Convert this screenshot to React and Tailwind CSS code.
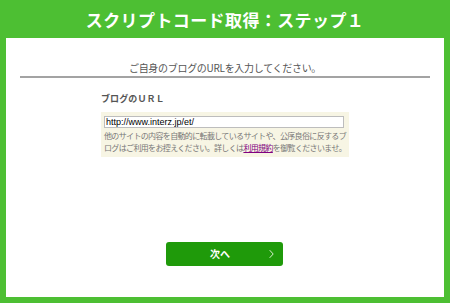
export default function App() {
  const jp = { fontFamily: '"Noto Sans CJK JP", "Liberation Sans", sans-serif' };
  return (
    <div
      className="w-[450px] h-[303px] bg-[#4dbf33] px-[6px] pb-[6px] flex flex-col"
      style={jp}
    >
      {/* Title bar */}
      <h1 className="h-[38px] flex items-center justify-center text-white font-bold text-[17px] leading-none tracking-[0.4px]">
        スクリプトコード取得：ステップ１
      </h1>

      {/* Panel */}
      <div className="flex-1 bg-white flex flex-col">
        <p className="mt-[24px] text-center text-[10px] leading-[12px] tracking-[-0.3px] text-[#555]">
          ご自身のブログのURLを入力してください。
        </p>
        <div className="mx-[14px] mt-[2px] h-[2px] bg-[#a3a3a3]" />

        <div className="ml-[95px] w-[248px]">
          <div className="mt-[16px] text-[9px] leading-[10px] font-bold text-[#555] tracking-[0.1px]">
            ブログのＵＲＬ
          </div>
          <div className="mt-[8px] bg-[#f7f5e4] px-[3px] pt-[4px] pb-[3px]">
            <input
              type="text"
              defaultValue="http://www.interz.jp/et/"
              className="block w-[240px] h-[12px] border border-[#bdbdbd] bg-white px-[1px] text-[9px] leading-[10px] text-black outline-none"
              style={{ fontFamily: '"Liberation Sans", Arial, sans-serif' }}
            />
            <p className="mt-[2px] text-[8px] leading-[12px] tracking-[-0.65px] text-[#777] whitespace-nowrap">
              他のサイトの内容を自動的に転載しているサイトや、公序良俗に反するブ
              <br />
              ログはご利用をお控えください。詳しくは
              <a href="#" className="text-[#800080] underline">
                利用規約
              </a>
              を御覧くださいませ。
            </p>
          </div>
        </div>

        <button className="mt-[85px] ml-[160px] w-[117px] h-[24px] rounded-[3px] bg-[#1f9a0a] text-white relative flex items-center justify-center">
          <span className="text-[10px] font-bold leading-none -ml-[9px]">次へ</span>
          <svg
            className="absolute right-[9px] top-1/2 -translate-y-1/2"
            width="5"
            height="9"
            viewBox="0 0 5 9"
            fill="none"
          >
            <path d="M0.7 0.7 L4.2 4.5 L0.7 8.3" stroke="#d8f0d0" strokeWidth="1" />
          </svg>
        </button>
      </div>
    </div>
  );
}
